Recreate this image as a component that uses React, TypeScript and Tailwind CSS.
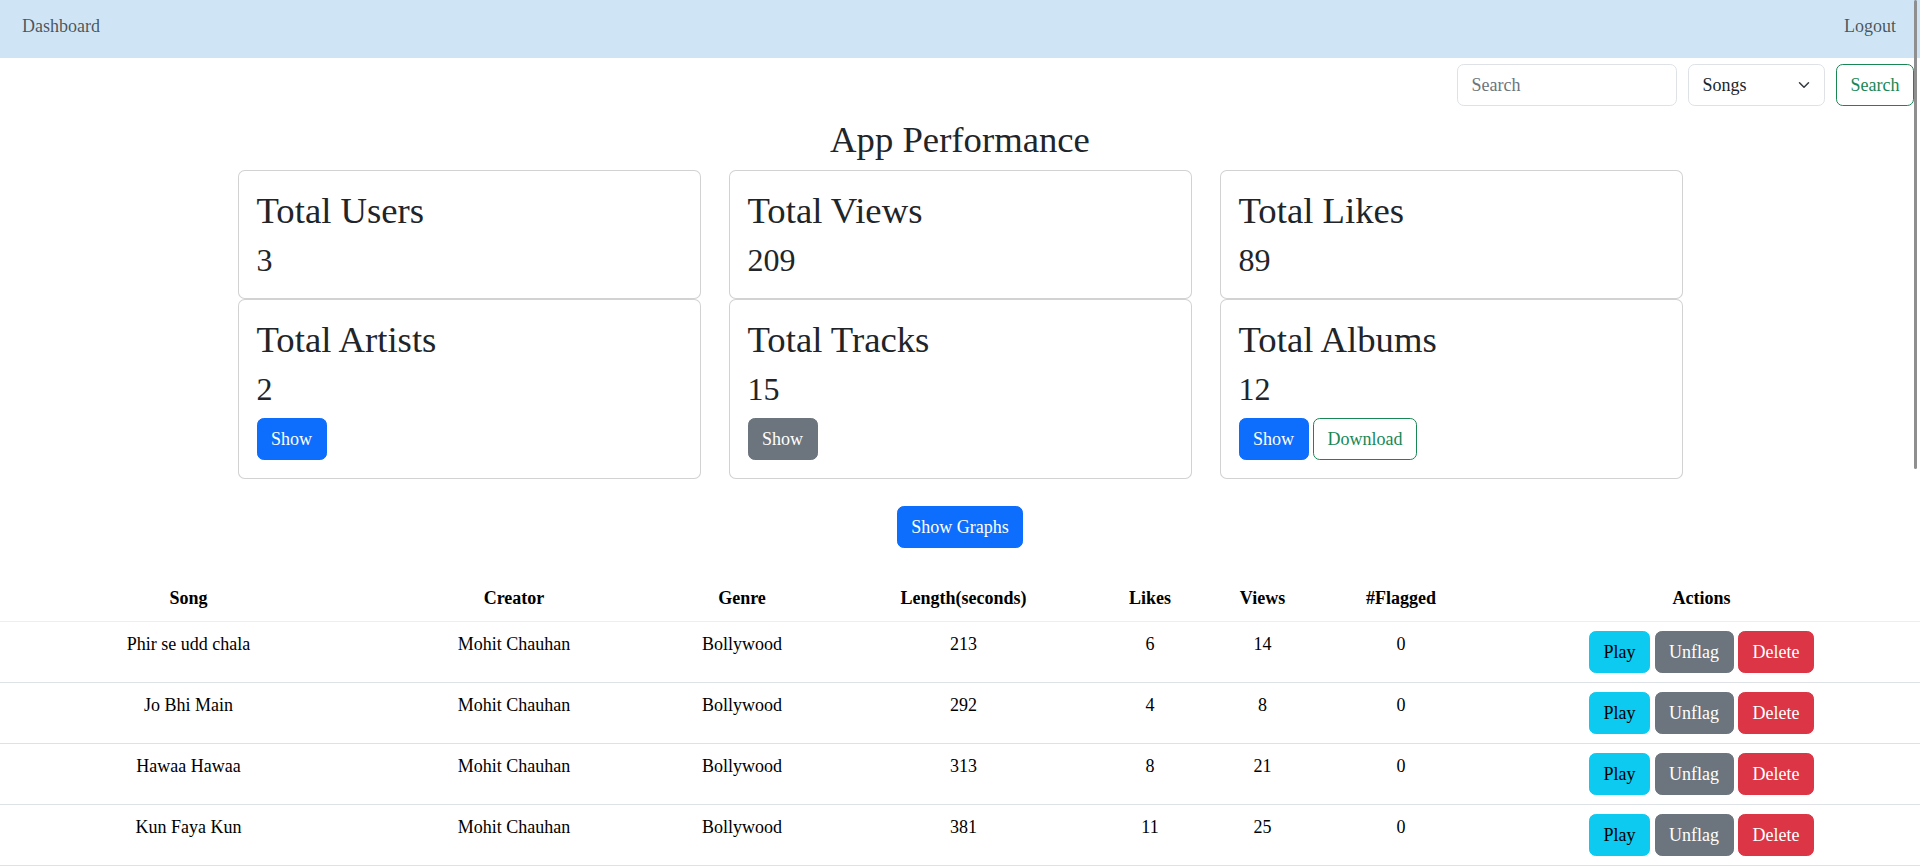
import React from 'react';

type Song = {
  title: string;
  creator: string;
  genre: string;
  length: number;
  likes: number;
  views: number;
  flagged: number;
};

const songs: Song[] = [
  { title: 'Phir se udd chala', creator: 'Mohit Chauhan', genre: 'Bollywood', length: 213, likes: 6, views: 14, flagged: 0 },
  { title: 'Jo Bhi Main', creator: 'Mohit Chauhan', genre: 'Bollywood', length: 292, likes: 4, views: 8, flagged: 0 },
  { title: 'Hawaa Hawaa', creator: 'Mohit Chauhan', genre: 'Bollywood', length: 313, likes: 8, views: 21, flagged: 0 },
  { title: 'Kun Faya Kun', creator: 'Mohit Chauhan', genre: 'Bollywood', length: 381, likes: 11, views: 25, flagged: 0 },
];

const btn = 'px-[13.5px] py-[6.5px] leading-[27px] rounded-[6.75px] border';

const StatCard: React.FC<{ title: string; value: number; children?: React.ReactNode }> = ({ title, value, children }) => (
  <div className="border border-black/[.175] rounded-[6.75px] p-[18px] bg-white">
    <h2 className="text-[36.7px] leading-[43.2px] mb-[10px]">{title}</h2>
    <h3 className={`text-[32px] leading-[37.8px] ${children ? 'mb-[9px]' : ''}`}>{value}</h3>
    {children && <div className="flex gap-[4.5px]">{children}</div>}
  </div>
);

export default function App() {
  return (
    <div className="bg-white text-[18px] text-[#212529] font-['Liberation_Serif',serif]">
      {/* Navbar */}
      <nav className="h-[58px] bg-[#cfe5f5] flex justify-between items-start pt-[13px] px-[22px] pr-[24px] text-black/65">
        <a>Dashboard</a>
        <a>Logout</a>
      </nav>

      {/* Search */}
      <div className="flex justify-end gap-[11px] mt-[6px] pr-[6px]">
        <input
          placeholder="Search"
          className="w-[220px] border border-[#dee2e6] rounded-[6.75px] px-[13.5px] py-[6.5px] leading-[27px] placeholder:text-[#6c757d] outline-none"
        />
        <div className="relative w-[137px]">
          <select className="w-full appearance-none border border-[#dee2e6] rounded-[6.75px] pl-[13.5px] pr-[40px] py-[6.5px] leading-[27px] bg-white outline-none">
            <option>Songs</option>
          </select>
          <svg className="absolute right-[13.5px] top-1/2 -translate-y-1/2 pointer-events-none" width="16" height="12" viewBox="0 0 16 16">
            <path d="m2 5 6 6 6-6" fill="none" stroke="#343a40" strokeWidth="2" strokeLinecap="round" strokeLinejoin="round" />
          </svg>
        </div>
        <button className={`${btn} border-[#198754] text-[#198754]`}>Search</button>
      </div>

      <h2 className="text-center text-[36.7px] leading-[43.2px] mt-[12px]">App Performance</h2>

      {/* Stat cards */}
      <div className="w-[1445px] mx-auto mt-[9px] grid grid-cols-3 gap-x-[28px]">
        <StatCard title="Total Users" value={3} />
        <StatCard title="Total Views" value={209} />
        <StatCard title="Total Likes" value={89} />
        <StatCard title="Total Artists" value={2}>
          <button className={`${btn} bg-[#0d6efd] border-[#0d6efd] text-white`}>Show</button>
        </StatCard>
        <StatCard title="Total Tracks" value={15}>
          <button className={`${btn} bg-[#6c757d] border-[#6c757d] text-white`}>Show</button>
        </StatCard>
        <StatCard title="Total Albums" value={12}>
          <button className={`${btn} bg-[#0d6efd] border-[#0d6efd] text-white`}>Show</button>
          <button className={`${btn} border-[#198754] text-[#198754]`}>Download</button>
        </StatCard>
      </div>

      <div className="flex justify-center mt-[27px]">
        <button className={`${btn} bg-[#0d6efd] border-[#0d6efd] text-white`}>Show Graphs</button>
      </div>

      {/* Songs table */}
      <table className="w-full table-fixed mt-[28px] text-center align-top text-black">
        <colgroup>
          <col className="w-[377px]" />
          <col className="w-[274px]" />
          <col className="w-[182px]" />
          <col className="w-[261px]" />
          <col className="w-[112px]" />
          <col className="w-[113px]" />
          <col className="w-[164px]" />
          <col className="w-[437px]" />
        </colgroup>
        <thead>
          <tr className="border-b border-[#eceef0]">
            {['Song', 'Creator', 'Genre', 'Length(seconds)', 'Likes', 'Views', '#Flagged', 'Actions'].map(h => (
              <th key={h} className="p-[9px] leading-[27px] font-bold">{h}</th>
            ))}
          </tr>
        </thead>
        <tbody>
          {songs.map(s => (
            <tr key={s.title} className="border-b border-[#dee2e6] align-top">
              <td className="p-[9px] leading-[27px]">{s.title}</td>
              <td className="p-[9px] leading-[27px]">{s.creator}</td>
              <td className="p-[9px] leading-[27px]">{s.genre}</td>
              <td className="p-[9px] leading-[27px]">{s.length}</td>
              <td className="p-[9px] leading-[27px]">{s.likes}</td>
              <td className="p-[9px] leading-[27px]">{s.views}</td>
              <td className="p-[9px] leading-[27px]">{s.flagged}</td>
              <td className="p-[9px]">
                <div className="flex justify-center gap-[4.5px]">
                  <button className={`${btn} bg-[#0dcaf0] border-[#0dcaf0] text-black`}>Play</button>
                  <button className={`${btn} bg-[#6c757d] border-[#6c757d] text-white`}>Unflag</button>
                  <button className={`${btn} bg-[#dc3545] border-[#dc3545] text-white`}>Delete</button>
                </div>
              </td>
            </tr>
          ))}
        </tbody>
      </table>

      {/* overlay scrollbar thumb */}
      <div className="fixed top-0 right-[3px] w-[3px] h-[469px] bg-[#8f8f8f] rounded-full pointer-events-none" />
    </div>
  );
}
